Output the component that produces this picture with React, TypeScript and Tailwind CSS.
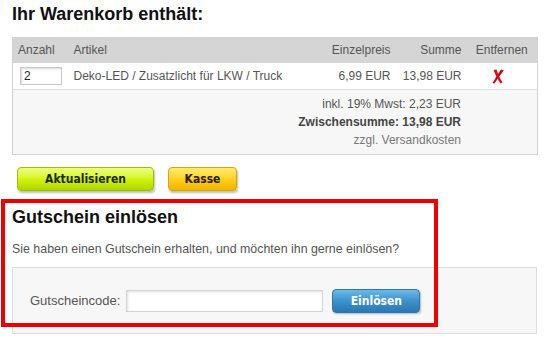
import React from 'react';

const RemoveIcon: React.FC = () => (
	<svg width="12" height="15" viewBox="0 0 12 15" className="inline-block align-middle">
		<path d="M1.5 1 L4.5 0.5 C6 5, 8 9.5, 10.5 13.5 L8.5 14.5 C6 10.5, 3.5 6, 1.5 1 Z" fill="#d81010" />
		<path d="M9 0.5 L11.8 1.2 C9 5, 5.5 9.5, 2.5 14.5 L0.5 14 C3.5 9, 6 5, 9 0.5 Z" fill="#c80a0a" />
	</svg>
);

export default function App() {
	return (
		<div className="relative w-[548px] h-[341px] overflow-hidden bg-white font-['Liberation_Sans',Arial,sans-serif] text-[12px] text-[#555]">
			<h1 className="ml-[12px] mt-[2px] text-[18px] leading-[24px] font-bold text-[#111]">Ihr Warenkorb enthält:</h1>

			<table className="ml-[12px] mt-[11px] w-[525px] table-fixed border-collapse border border-[#d2d2d2]">
				<colgroup>
					<col className="w-[56px]" />
					<col className="w-[252px]" />
					<col className="w-[75px]" />
					<col className="w-[71px]" />
					<col className="w-[71px]" />
				</colgroup>
				<thead>
					<tr className="h-[25px] bg-[#d5d5d5] text-[12px] text-[#555]">
						<th className="pl-[5px] text-left font-normal">Anzahl</th>
						<th className="pl-[5px] text-left font-normal">Artikel</th>
						<th className="pr-[5px] text-right font-normal">Einzelpreis</th>
						<th className="pr-[5px] text-right font-normal">Summe</th>
						<th className="text-center font-normal">Entfernen</th>
					</tr>
				</thead>
				<tbody>
					<tr className="h-[27px] bg-white border-b border-[#dcdcdc]">
						<td className="pl-[7px]">
							<input
								type="text"
								defaultValue="2"
								className="block w-[42px] h-[18px] border border-[#c8c8c8] bg-white px-[3px] text-[12px] text-[#222] shadow-[inset_1px_1px_2px_rgba(0,0,0,0.15)] outline-none"
							/>
						</td>
						<td className="pl-[5px]">Deko-LED / Zusatzlicht für LKW / Truck</td>
						<td className="pr-[5px] text-right">6,99 EUR</td>
						<td className="pr-[5px] text-right">13,98 EUR</td>
						<td className="text-center pr-[7px]"><RemoveIcon /></td>
					</tr>
					<tr className="bg-[#f7f7f7]">
						<td colSpan={5} className="pr-[76px] pt-[5px] pb-[5px] text-right leading-[18px]">
							<div>inkl. 19% Mwst: 2,23 EUR</div>
							<div className="font-bold text-[#444]">Zwischensumme: 13,98 EUR</div>
							<div className="text-[#777]">zzgl. Versandkosten</div>
						</td>
					</tr>
				</tbody>
			</table>

			<div className="mt-[12px] ml-[17px] flex gap-[14px] font-['DejaVu_Sans_Condensed','DejaVu_Sans',sans-serif] text-[12px] font-bold text-[#1a2a00]">
				<button
					type="button"
					className="w-[137px] h-[24px] rounded-[4px] border border-[#9cbf00] bg-gradient-to-b from-[#efff7a] via-[#d4f50a] to-[#aed400] shadow-[1px_2px_2px_rgba(0,0,0,0.25)]"
				>
					Aktualisieren
				</button>
				<button
					type="button"
					className="w-[69px] h-[24px] rounded-[4px] border border-[#d6a600] bg-gradient-to-b from-[#ffec6a] via-[#ffd21a] to-[#f0b400] text-[#2a1a00] shadow-[1px_2px_2px_rgba(0,0,0,0.25)]"
				>
					Kasse
				</button>
			</div>

			<h2 className="ml-[12px] mt-[14px] text-[18px] leading-[24px] font-bold text-[#111]">Gutschein einlösen</h2>
			<p className="ml-[12px] mt-[12px] leading-[16px] text-[12.4px] text-[#555]">
				Sie haben einen Gutschein erhalten, und möchten ihn gerne einlösen?
			</p>

			<div className="ml-[12px] mt-[10px] w-[525px] h-[67px] flex items-center pl-[17px] border border-[#dcdcdc] bg-[#f7f7f7]">
				<label className="text-[13px] text-[#555]">Gutscheincode:</label>
				<input
					type="text"
					className="ml-[6px] w-[197px] h-[22px] border border-[#d4d4d4] bg-white shadow-[inset_1px_1px_3px_rgba(0,0,0,0.12)] outline-none"
				/>
				<button
					type="button"
					className="ml-[9px] w-[88px] h-[24px] rounded-[4px] border border-[#2a77ad] bg-gradient-to-b from-[#6bb9e8] via-[#3d92cc] to-[#2a78b3] font-['DejaVu_Sans_Condensed','DejaVu_Sans',sans-serif] text-[12px] font-bold text-white shadow-[1px_1px_2px_rgba(0,0,0,0.25)]"
				>
					Einlösen
				</button>
			</div>

			<div className="pointer-events-none absolute left-[1px] top-[199px] w-[437px] h-[128px] border-[4px] border-[#ee0000]" />
		</div>
	);
}
